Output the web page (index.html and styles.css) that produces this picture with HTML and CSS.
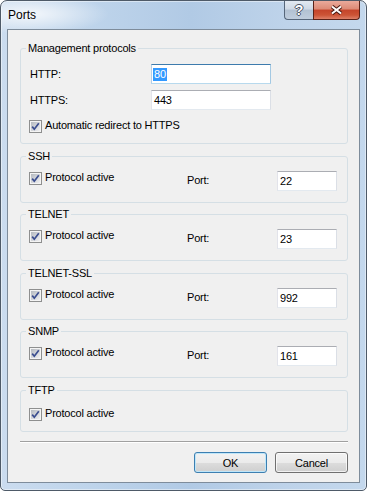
FILE: index.html
```html
<!DOCTYPE html>
<html lang="en">
<head>
    <meta charset="UTF-8">
    <title>Ports</title>
    <link rel="stylesheet" href="styles.css">
</head>
<body>
    <svg class="defs" width="0" height="0">
        <defs>
            <linearGradient id="boxFill" x1="0" y1="0" x2="1" y2="1">
                <stop offset="0" stop-color="#b4b9c0"/>
                <stop offset="1" stop-color="#f0f0f1"/>
            </linearGradient>
            <symbol id="checked" viewBox="0 0 13 13">
                <rect x="0.5" y="0.5" width="12" height="12" fill="#f4f4f4" stroke="#8e8f8f"/>
                <rect x="2" y="2" width="9" height="9" fill="url(#boxFill)"/>
                <path d="M3.2 6.6 L5.3 9.2 L9.8 3.2" fill="none" stroke="#3a4d8f" stroke-width="1.7"/>
            </symbol>
        </defs>
    </svg>

    <div class="window">
        <div class="titlebar">
            <span class="title">Ports</span>
            <div class="caption-buttons">
                <span class="cap-btn help">?</span>
                <span class="cap-btn close">
                    <svg width="13" height="10" viewBox="0 0 13 10">
                        <path d="M2 1.5 L11 8.5 M11 1.5 L2 8.5" stroke="#4a1a12" stroke-width="4"/>
                        <path d="M2 1.5 L11 8.5 M11 1.5 L2 8.5" stroke="#fff" stroke-width="2"/>
                    </svg>
                </span>
            </div>
        </div>

        <div class="client">
            <fieldset class="group group-mgmt">
                <legend>Management protocols</legend>
                <div class="field-row">
                    <span class="field-label">HTTP:</span>
                    <span class="textbox wide focused"><span class="sel">80</span></span>
                </div>
                <div class="field-row">
                    <span class="field-label">HTTPS:</span>
                    <span class="textbox wide">443</span>
                </div>
                <div class="check check-mgmt">
                    <svg class="checkbox"><use href="#checked"/></svg>
                    <span>Automatic redirect to HTTPS</span>
                </div>
            </fieldset>

            <fieldset class="group">
                <legend>SSH</legend>
                <div class="proto-row">
                    <div class="check"><svg class="checkbox"><use href="#checked"/></svg><span>Protocol active</span></div>
                    <span class="port-label">Port:</span>
                    <span class="textbox port">22</span>
                </div>
            </fieldset>

            <fieldset class="group tight">
                <legend>TELNET</legend>
                <div class="proto-row">
                    <div class="check"><svg class="checkbox"><use href="#checked"/></svg><span>Protocol active</span></div>
                    <span class="port-label">Port:</span>
                    <span class="textbox port">23</span>
                </div>
            </fieldset>

            <fieldset class="group">
                <legend>TELNET-SSL</legend>
                <div class="proto-row">
                    <div class="check"><svg class="checkbox"><use href="#checked"/></svg><span>Protocol active</span></div>
                    <span class="port-label">Port:</span>
                    <span class="textbox port">992</span>
                </div>
            </fieldset>

            <fieldset class="group tight">
                <legend>SNMP</legend>
                <div class="proto-row">
                    <div class="check"><svg class="checkbox"><use href="#checked"/></svg><span>Protocol active</span></div>
                    <span class="port-label">Port:</span>
                    <span class="textbox port">161</span>
                </div>
            </fieldset>

            <fieldset class="group group-tftp">
                <legend>TFTP</legend>
                <div class="check"><svg class="checkbox"><use href="#checked"/></svg><span>Protocol active</span></div>
            </fieldset>

            <div class="separator"></div>

            <div class="footer">
                <button class="btn default">OK</button>
                <button class="btn">Cancel</button>
            </div>
        </div>
    </div>
</body>
</html>
```

FILE: styles.css
```css
body {
    margin: 0;
    background-color: #fff;
    font-family: "Liberation Sans", Arial, sans-serif;
    font-size: 11px;
    letter-spacing: -0.2px;
    color: #000;
}

.defs {
    position: absolute;
}

.window {
    box-sizing: border-box;
    width: 367px;
    height: 491px;
    border: 1px solid #4e5a68;
    border-radius: 7px 7px 5px 5px;
    padding: 0 6px 7px 6px;
    display: flex;
    flex-direction: column;
    background:
        radial-gradient(80px 20px at 28px 13px, rgba(255, 255, 255, 0.8), rgba(255, 255, 255, 0)),
        linear-gradient(90deg, #cbdcef 0%, #bed4eb 25%, #b1cae5 52%, #bed3ea 78%, #c4d8ed 100%);
    box-shadow: inset 0 0 0 1px rgba(255, 255, 255, 0.45);
}

/* title bar */

.titlebar {
    height: 28px;
    display: flex;
    justify-content: space-between;
    align-items: flex-start;
}

.title {
    font-size: 12px;
    line-height: 14px;
    letter-spacing: 0;
    margin: 7px 0 0 1px;
}

.caption-buttons {
    display: flex;
}

.cap-btn {
    box-sizing: border-box;
    height: 19px;
    border: 1px solid #56667a;
    border-top: 0;
    display: flex;
    align-items: center;
    justify-content: center;
}

.help {
    width: 29px;
    border-right: 0;
    border-radius: 0 0 0 4px;
    background: linear-gradient(#e2e9f1, #cfd9e5 45%, #b2c1d2 50%, #bfcddd 100%);
    color: #fff;
    font-size: 14px;
    font-weight: bold;
    text-shadow: 1px 0 0 #4c5566, -1px 0 0 #4c5566, 0 1px 0 #4c5566, 0 -1px 0 #4c5566;
}

.close {
    width: 47px;
    border-color: #5a2218;
    border-radius: 0 0 4px 0;
    background: linear-gradient(#eaaa9b, #dc8a76 45%, #c5442a 50%, #cc5436 78%, #de8068 100%);
}

/* client area */

.client {
    flex: 1;
    border: 1px solid #7e8c9b;
    background-color: #f0f0f0;
    padding: 12px 11px 0 12px;
}

.group {
    margin: 6px 0 0 0;
    padding: 8px 10px 11px 9px;
    border: 1px solid #d5dfe5;
    border-radius: 3px;
}

.group.tight {
    margin-top: 5px;
}

.group-mgmt {
    margin-top: 0;
    padding: 9px 10px 10px 9px;
}

.group-tftp {
    padding: 10px 10px 10px 9px;
}

legend {
    padding: 0 2px;
    margin-left: -4px;
    line-height: 13px;
}

.field-row {
    display: flex;
    align-items: center;
    height: 20px;
}

.field-row + .field-row {
    margin-top: 6px;
}

.field-label {
    width: 121px;
    line-height: 13px;
}

.textbox {
    box-sizing: border-box;
    display: block;
    height: 20px;
    border: 1px solid;
    border-color: #abadb3 #dbdfe6 #e3e9ef #e2e3ea;
    background-color: #fff;
    padding: 0 2px;
    line-height: 18px;
}

.textbox.wide {
    width: 120px;
}

.textbox.port {
    width: 60px;
}

.textbox.focused {
    border-color: #3d7bad #a4c9e3 #b7d9ed #b5cfe7;
    padding-left: 1px;
}

.sel {
    display: inline-block;
    background-color: #3399ff;
    color: #fff;
    padding: 0 1px;
    line-height: 13px;
}

.check {
    display: flex;
    align-items: flex-start;
    margin-left: -1px;
    line-height: 13px;
}

.check-mgmt {
    margin-top: 9px;
}

.checkbox {
    width: 13px;
    height: 13px;
    margin: 1px 3px 0 0;
    flex: none;
}

.proto-row {
    display: grid;
    grid-template-columns: 157px 90px 60px;
    align-items: start;
    height: 20px;
}

.port-label {
    margin-top: 3px;
    line-height: 13px;
}

/* buttons */

.separator {
    margin-top: 9px;
    border-top: 1px solid #a0a0a0;
    border-bottom: 1px solid #fff;
}

.footer {
    display: flex;
    justify-content: flex-end;
    gap: 8px;
    margin-top: 9px;
}

.btn {
    box-sizing: border-box;
    width: 73px;
    height: 21px;
    padding: 0;
    border: 1px solid #707070;
    border-radius: 3px;
    background: linear-gradient(#f2f2f2, #ebebeb 50%, #dddddd 50%, #cfcfcf);
    box-shadow: inset 0 0 0 1px rgba(255, 255, 255, 0.7);
    font-family: "Liberation Sans", Arial, sans-serif;
    font-size: 11px;
    letter-spacing: -0.2px;
    color: #000;
}

.btn.default {
    border-color: #3c7fb1;
    box-shadow: inset 0 0 0 1px #bfe6f9;
}
```
